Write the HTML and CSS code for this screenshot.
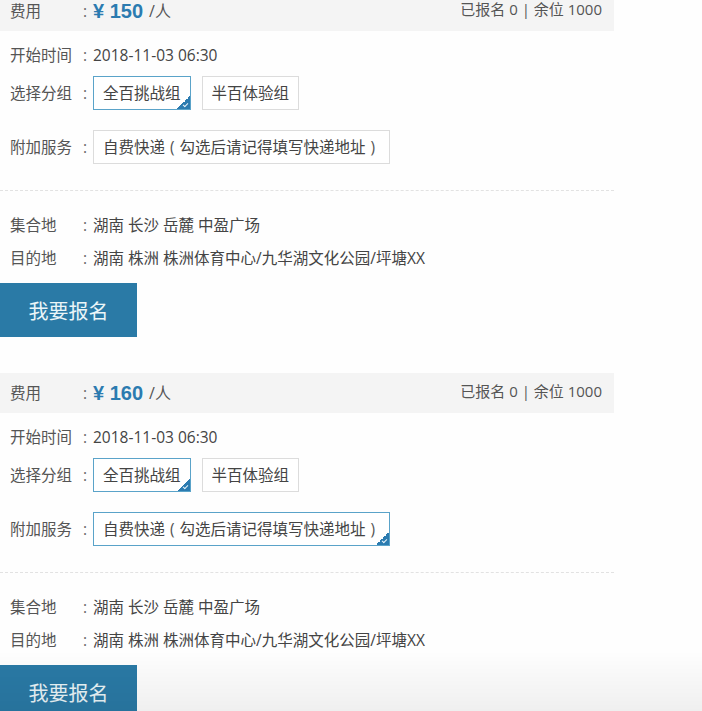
FILE: index.html
```html
<!DOCTYPE html>
<html lang="zh-CN">
<head>
<meta charset="utf-8">
<title>报名</title>
<link rel="stylesheet" href="styles.css">
</head>
<body>
<div class="page">
  <section class="event">
    <div class="fee-bar">
      <div class="row">
        <span class="label">费用</span><span class="colon">:</span><span class="price">¥ 150</span><span class="unit">/人</span>
      </div>
      <div class="stats">已报名 0 | 余位 1000</div>
    </div>
    <div class="info">
      <div class="row time-row"><span class="label">开始时间</span><span class="colon">:</span><span class="value">2018-11-03 06:30</span></div>
      <div class="row opt-row"><span class="label">选择分组</span><span class="colon">:</span>
        <div class="options"><span class="opt selected">全百挑战组</span><span class="opt">半百体验组</span></div>
      </div>
      <div class="row opt-row service-row"><span class="label">附加服务</span><span class="colon">:</span>
        <div class="options"><span class="opt">自费快递<span class="paren">(</span>勾选后请记得填写快递地址<span class="paren">)</span></span></div>
      </div>
    </div>
    <div class="divider"></div>
    <div class="places">
      <div class="row"><span class="label">集合地</span><span class="colon">:</span><span class="value">湖南 长沙 岳麓 中盈广场</span></div>
      <div class="row"><span class="label">目的地</span><span class="colon">:</span><span class="value">湖南 株洲 株洲体育中心/九华湖文化公园/坪塘XX</span></div>
    </div>
    <button class="signup">我要报名</button>
  </section>

  <section class="event">
    <div class="fee-bar">
      <div class="row">
        <span class="label">费用</span><span class="colon">:</span><span class="price">¥ 160</span><span class="unit">/人</span>
      </div>
      <div class="stats">已报名 0 | 余位 1000</div>
    </div>
    <div class="info">
      <div class="row time-row"><span class="label">开始时间</span><span class="colon">:</span><span class="value">2018-11-03 06:30</span></div>
      <div class="row opt-row"><span class="label">选择分组</span><span class="colon">:</span>
        <div class="options"><span class="opt selected">全百挑战组</span><span class="opt">半百体验组</span></div>
      </div>
      <div class="row opt-row service-row"><span class="label">附加服务</span><span class="colon">:</span>
        <div class="options"><span class="opt selected">自费快递<span class="paren">(</span>勾选后请记得填写快递地址<span class="paren">)</span></span></div>
      </div>
    </div>
    <div class="divider"></div>
    <div class="places">
      <div class="row"><span class="label">集合地</span><span class="colon">:</span><span class="value">湖南 长沙 岳麓 中盈广场</span></div>
      <div class="row"><span class="label">目的地</span><span class="colon">:</span><span class="value">湖南 株洲 株洲体育中心/九华湖文化公园/坪塘XX</span></div>
    </div>
    <button class="signup">我要报名</button>
  </section>
</div>
<div class="shade"></div>
</body>
</html>
```

FILE: styles.css
```css
html, body {
  margin: 0;
  padding: 0;
  background: #fefefe;
}
body {
  font-family: "Open Sans", "Noto Sans CJK SC", sans-serif;
  font-size: 15.5px;
  color: #555;
  overflow: hidden;
  height: 711px;
}
.page {
  width: 614px;
  margin-top: -9px;
  display: flex;
  flex-direction: column;
  gap: 36px;
}
.event {
  display: flex;
  flex-direction: column;
}
.fee-bar {
  height: 40px;
  background: #f4f4f4;
  display: flex;
  justify-content: space-between;
  align-items: center;
  padding: 0 12px 0 10px;
}
.row {
  display: flex;
  align-items: center;
  line-height: 24px;
}
.label {
  width: 71px;
  flex: none;
  color: #555;
  white-space: nowrap;
}
.colon {
  width: 10px;
  flex: none;
  color: #666;
  padding-left: 2px;
}
.price {
  color: #2b7bb0;
  font-weight: 700;
  font-size: 20px;
  font-family: "Liberation Sans", "Noto Sans CJK SC", sans-serif;
  margin-right: 6px;
}
.unit {
  font-size: 16px;
  color: #555;
}
.stats {
  align-self: flex-start;
  padding-top: 8px;
  line-height: 20px;
  font-size: 15px;
  color: #555;
}
.info {
  padding: 12px 0 0 10px;
  display: flex;
  flex-direction: column;
}
.value {
  color: #444;
  white-space: nowrap;
}
.opt-row {
  margin-top: 9px;
}
.service-row {
  margin-top: 20px;
}
.options {
  display: flex;
  gap: 11px;
}
.opt {
  position: relative;
  display: inline-flex;
  align-items: center;
  height: 32px;
  padding: 0 9px;
  border: 1px solid #dcdcdc;
  background: #fff;
  color: #444;
  white-space: nowrap;
}
.paren {
  padding: 0 5px;
  color: #555;
}
.opt.selected {
  border-color: #5aa3c9;
}
.opt.selected::after {
  content: "";
  position: absolute;
  right: 0;
  bottom: 0;
  width: 13px;
  height: 13px;
  background: linear-gradient(135deg, transparent 50%, #2b7bb0 50%);
}
.opt.selected::before {
  content: "";
  position: absolute;
  right: 2px;
  bottom: 3px;
  width: 4px;
  height: 2px;
  border-left: 1px solid #e8f3fa;
  border-bottom: 1px solid #e8f3fa;
  transform: rotate(-45deg);
  z-index: 1;
}
.divider {
  margin-top: 26px;
  border-top: 1px dashed #e2e2e2;
}
.places {
  padding: 22px 0 0 10px;
  display: flex;
  flex-direction: column;
  gap: 9px;
}
.signup {
  align-self: flex-start;
  margin-top: 13px;
  height: 54px;
  width: 137px;
  border: none;
  background: #2a7aa6;
  color: #eaf5f8;
  font-family: "Noto Sans CJK SC", sans-serif;
  font-size: 20px;
  padding: 0;
  cursor: pointer;
}
.shade {
  position: fixed;
  left: 0;
  right: 0;
  bottom: 0;
  height: 60px;
  pointer-events: none;
  background: linear-gradient(to bottom, rgba(0,0,0,0), rgba(0,0,0,0.06));
}
```
